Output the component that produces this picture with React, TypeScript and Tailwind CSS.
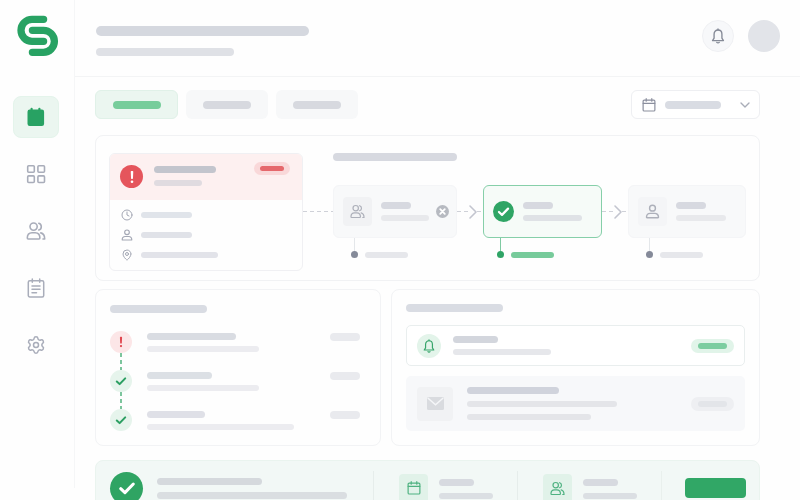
import type { ReactNode } from 'react'
import { ChevronDown, ChevronRight, Clock, MapPin, Settings } from 'lucide-react'
import clsx from 'clsx'

type IconProps = { className?: string }

function Logo() {
  return (
    <svg viewBox="0 0 42 42" className="ml-1 size-[42px]" fill="none" stroke="#28a263" strokeWidth="7.3" strokeLinecap="round">
      <path d="M26.6 4.3H15a11 11 0 0 0 0 22h11.6" />
      <path d="M15.4 15.3h11a11 11 0 0 1 0 22h-11" />
    </svg>
  )
}

function CalendarSolid({ className }: IconProps) {
  return (
    <svg viewBox="0 0 20 20" className={className} fill="currentColor">
      <path d="M3.7 2.6h.8V1.8a1.1 1.1 0 0 1 2.2 0v.8h5.6V1.8a1.1 1.1 0 0 1 2.2 0v.8h1.4a2.2 2.2 0 0 1 2.2 2.2v12a2.2 2.2 0 0 1-2.2 2.2H3.7a2.2 2.2 0 0 1-2.2-2.2v-12a2.2 2.2 0 0 1 2.2-2.2Z" />
    </svg>
  )
}

function GridIcon({ className }: IconProps) {
  return (
    <svg viewBox="0 0 20 20" className={className} fill="none" stroke="currentColor" strokeWidth="1.6">
      <rect x="1.7" y="1.7" width="6.6" height="6.6" rx="1" />
      <rect x="11.9" y="1.7" width="6.6" height="6.6" rx="1" />
      <rect x="1.7" y="11.9" width="6.6" height="6.6" rx="1" />
      <rect x="11.9" y="11.9" width="6.6" height="6.6" rx="1" />
    </svg>
  )
}

function UsersIcon({ className }: IconProps) {
  return (
    <svg viewBox="0 0 20 20" className={className} fill="none" stroke="currentColor" strokeWidth="1.6" strokeLinecap="round" strokeLinejoin="round">
      <circle cx="7.6" cy="5.6" r="3.6" />
      <path d="M2.2 18h10.8a.9.9 0 0 0 .9-.9c0-3.4-2-5.3-4.7-5.3H6c-2.7 0-4.7 1.9-4.7 5.3 0 .5.4.9.9.9Z" />
      <path d="M12.8 2.3a3.5 3.5 0 0 1 0 6.7" />
      <path d="M14.8 11.9c2.5.6 3.9 2.6 3.9 6.1h-1.7" />
    </svg>
  )
}

function UserIcon({ className }: IconProps) {
  return (
    <svg viewBox="0 0 20 20" className={className} fill="none" stroke="currentColor" strokeWidth="1.9" strokeLinejoin="round">
      <circle cx="10" cy="5.5" r="3.9" />
      <path d="M2.6 18.4h14.8a.6.6 0 0 0 .6-.6c0-3.5-2.1-5.3-5-5.3H7c-2.9 0-5 1.8-5 5.3 0 .3.3.6.6.6Z" />
    </svg>
  )
}

function NotesIcon({ className }: IconProps) {
  return (
    <svg viewBox="0 0 20 20" className={className} fill="none" stroke="currentColor" strokeWidth="1.5" strokeLinecap="round">
      <rect x="2.3" y="2.7" width="15.4" height="16.3" rx="1.5" />
      <path d="M6.3.9v3.4M13.700.9v3.4M6 8h8M6 11.300h8M6 14.700h4.500" />
    </svg>
  )
}

function CalendarIcon({ className }: IconProps) {
  return (
    <svg viewBox="0 0 20 20" className={className} fill="none" stroke="currentColor" strokeWidth="1.7" strokeLinecap="round">
      <rect x="1.6" y="3" width="16.8" height="15.6" rx="1.6" />
      <path d="M1.6 7.6h16.8M6 1v3.6M14 1v3.6" />
    </svg>
  )
}

function BellIcon({ className }: IconProps) {
  return (
    <svg viewBox="0 0 20 20" className={className} fill="none" stroke="currentColor" strokeWidth="1.7" strokeLinecap="round" strokeLinejoin="round">
      <path d="M10 2.500c-3 0-4.900 2.200-4.900 5.200v5L3.200 15.700h13.600l-1.900-3v-5c0-3-1.900-5.200-4.900-5.200Z" />
      <path d="M10 1.200v1.300M8.500 18c.7.9 2.300.9 3 0" />
    </svg>
  )
}

function CheckIcon({ className }: IconProps) {
  return (
    <svg viewBox="0 0 20 20" className={className} fill="none" stroke="currentColor" strokeWidth="3.4" strokeLinecap="round" strokeLinejoin="round">
      <path d="m3 10.800 4.700 4.400L17 5.600" />
    </svg>
  )
}

function AlertMark({ className }: IconProps) {
  return (
    <svg viewBox="0 0 20 20" className={className} fill="currentColor">
      <path d="M8.200 2.400a1 1 0 0 1 1-1h1.600a1 1 0 0 1 1 1l-.4 9.400a1 1 0 0 1-1 .9h-.8a1 1 0 0 1-1-.9Z" />
      <circle cx="10" cy="16.800" r="1.900" />
    </svg>
  )
}

function CrossMark({ className }: IconProps) {
  return (
    <svg viewBox="0 0 20 20" className={className}>
      <circle cx="10" cy="10" r="10" fill="#b7bac1" />
      <path d="m6.500 6.500 7 7m0-7-7 7" stroke="#fff" strokeWidth="2.800" strokeLinecap="round" />
    </svg>
  )
}

function MailIcon({ className }: IconProps) {
  return (
    <svg viewBox="0 0 17 13" className={className}>
      <rect width="17" height="13" rx="1.500" fill="#d9dbdf" />
      <path d="m.8 1 7.700 6.800L16.200 1" fill="none" stroke="#f5f6f8" strokeWidth="1.500" />
    </svg>
  )
}

function Bar({ className }: { className: string }) {
  return <span className={clsx('block shrink-0 rounded-full', className)} />
}

const navItems = [
  { label: 'Schedule', icon: CalendarSolid, active: true },
  { label: 'Overview', icon: GridIcon },
  { label: 'Team', icon: UsersIcon },
  { label: 'Reports', icon: NotesIcon },
  { label: 'Settings', icon: Settings },
]

function Sidebar() {
  return (
    <aside className="mb-3 w-[75px] shrink-0 border-r border-[#f5f6f7] pt-[15px] pl-[13px]">
      <Logo />
      <nav className="mt-[39px] flex flex-col gap-[15px]">
        {navItems.map(({ label, icon: Icon, active }) => (
          <a
            key={label}
            href="#"
            aria-label={label}
            className={clsx(
              'flex h-[42px] w-[46px] items-center justify-center rounded-lg',
              active ? 'border border-[#e4f4eb] bg-[#ebf6f0] text-[#28a263]' : 'text-[#a9adba]'
            )}
          >
            <Icon className="size-5" strokeWidth={1.8} />
          </a>
        ))}
      </nav>
    </aside>
  )
}

function Header() {
  return (
    <header className="flex h-[77px] items-center justify-between border-b border-[#f3f4f5] pr-5 pl-[21px]">
      <div className="space-y-3 pt-1.5">
        <Bar className="h-2.5 w-[213px] bg-[#d5d8df]" />
        <Bar className="h-2 w-[138px] bg-[#dfe1e6]" />
      </div>
      <div className="flex gap-3.5 pb-1">
        <button aria-label="Notifications" className="flex size-8 items-center justify-center rounded-full border border-[#f0f1f4] bg-[#f7f8fa] text-[#858a97]">
          <BellIcon className="size-4" />
        </button>
        <button aria-label="Account" className="size-8 rounded-full bg-[#e2e4e9]" />
      </div>
    </header>
  )
}

function Toolbar() {
  return (
    <div className="flex h-[29px] justify-between">
      <div className="flex gap-2">
        <button aria-label="Today" className="flex w-[83px] items-center justify-center rounded-md border border-[#e0f1e8] bg-[#ebf6f0]">
          <Bar className="h-2 w-12 bg-[#77cd9b]" />
        </button>
        <button aria-label="Upcoming" className="flex w-[82px] items-center justify-center rounded-md bg-[#f7f8f9]">
          <Bar className="h-2 w-12 bg-[#d7d9df]" />
        </button>
        <button aria-label="Past" className="flex w-[82px] items-center justify-center rounded-md bg-[#f7f8f9]">
          <Bar className="h-2 w-12 bg-[#d7d9df]" />
        </button>
      </div>
      <div className="relative flex w-[129px] items-center rounded-md border border-[#eeeff2] bg-white pr-1.5 pl-2.5">
        <CalendarIcon className="size-3.5 text-[#8b8f9e]" />
        <Bar className="ml-[9px] h-2 w-14 bg-[#d9dce3]" />
        <ChevronDown className="ml-auto size-4 text-[#a9adb8]" />
        <select aria-label="Date range" className="absolute inset-0 cursor-pointer opacity-0">
          <option value="week" aria-label="This week" />
          <option value="month" aria-label="This month" />
        </select>
      </div>
    </div>
  )
}

function IssueCard() {
  return (
    <article className="h-[118px] w-[194px] shrink-0 overflow-hidden rounded-md border border-[#f0f0f3]">
      <div className="flex h-[46px] bg-[#fdf0f0] pr-3 pl-2.5">
        <span className="mt-[11px] flex size-[23px] items-center justify-center rounded-full bg-[#e5555c] text-white">
          <AlertMark className="size-3.5" />
        </span>
        <div className="mt-3 ml-[11px] space-y-[7px]">
          <Bar className="h-[7px] w-[62px] bg-[#c3c5cd]" />
          <Bar className="h-1.5 w-12 bg-[#e0dbe0]" />
        </div>
        <span className="mt-2 ml-auto flex h-[13px] w-9 items-center justify-center rounded-full bg-[#f9d8d9]">
          <Bar className="h-[5px] w-6 bg-[#e5686c]" />
        </span>
      </div>
      <ul className="space-y-2 pt-[9px] pl-[11px] text-[#a3a7b4]">
        <li className="flex items-center gap-2">
          <Clock className="size-3" />
          <Bar className="h-1.5 w-[51px] bg-[#e0e4ea]" />
        </li>
        <li className="flex items-center gap-2">
          <UserIcon className="size-3" />
          <Bar className="h-1.5 w-[51px] bg-[#e0e2e8]" />
        </li>
        <li className="flex items-center gap-2">
          <MapPin className="size-3" />
          <Bar className="h-1.5 w-[77px] bg-[#e2e3e9]" />
        </li>
      </ul>
    </article>
  )
}

function Dashes({ className = 'flex-1' }: { className?: string }) {
  return <span className={clsx('h-px bg-[repeating-linear-gradient(to_right,#cfd1d8_0_4px,transparent_4px_7px)]', className)} />
}

function Arrow() {
  return (
    <div className="flex h-[53px] items-center">
      <Dashes className="flex-2" />
      <ChevronRight className="-mx-2 size-6 shrink-0 text-[#c3c5cf]" strokeWidth={1.6} />
      <Dashes />
    </div>
  )
}

type StepProps = {
  icon: ReactNode
  barWidth: string
  done?: boolean
  trailing?: ReactNode
}

function Step({ icon, barWidth, done, trailing }: StepProps) {
  return (
    <div>
      <div
        className={clsx(
          'flex h-[53px] items-center rounded-md border px-[9px]',
          done ? 'border-[#86cfa9] bg-[#f6fbf8]' : 'border-[#f4f5f7] bg-[#f8f9fa]'
        )}
      >
        {icon}
        <div className="ml-[9px] space-y-1.5">
          <Bar className="h-[7px] w-[30px] bg-[#d7d9e0]" />
          <Bar className={clsx('h-1.5', barWidth, done ? 'bg-[#dfe2e6]' : 'bg-[#e8e9ec]')} />
        </div>
        {trailing}
      </div>
      <div className={clsx('flex items-end', done ? 'pl-3.5' : 'pl-[18px]')}>
        <div className="flex flex-col items-center">
          <span className={clsx('h-[13px] w-px', done ? 'bg-[#7fcaa2]' : 'bg-[#e4e7ea]')} />
          <span className={clsx('size-[7px] rounded-full', done ? 'bg-[#2fa466]' : 'bg-[#858a99]')} />
        </div>
        <Bar className={clsx('ml-[7px] h-1.5 w-[43px]', done ? 'bg-[#77cb9b]' : 'bg-[#e6e7eb]')} />
      </div>
    </div>
  )
}

function FlowPanel() {
  return (
    <section className="mt-4 flex h-[146px] rounded-lg border border-[#f1f2f4] px-[13px] pt-[17px]">
      <IssueCard />
      <div className="mt-[58px] flex w-[30px] shrink-0">
        <Dashes />
      </div>
      <div className="flex-1">
        <Bar className="mb-6 h-2 w-[124px] bg-[#d7d9e0]" />
        <div className="grid grid-cols-[124px_26px_1fr_26px_1fr]">
          <Step
            icon={
              <span className="flex size-[29px] items-center justify-center rounded-sm bg-[#f1f2f4] text-[#adb0ba]">
                <UsersIcon className="size-[15px]" />
              </span>
            }
            barWidth="w-12"
            trailing={<CrossMark className="-mr-0.5 ml-auto size-[13px]" />}
          />
          <Arrow />
          <Step
            done
            icon={
              <span className="flex size-[21px] items-center justify-center rounded-full bg-[#2fa565] text-white">
                <CheckIcon className="size-[13px]" />
              </span>
            }
            barWidth="w-[59px]"
          />
          <Arrow />
          <Step
            icon={
              <span className="flex size-[29px] items-center justify-center rounded-sm bg-[#f4f5f7] text-[#adb0ba]">
                <UserIcon className="size-[15px]" />
              </span>
            }
            barWidth="w-[50px]"
          />
        </div>
      </div>
    </section>
  )
}

const activity = [
  { alert: true, title: 'w-[89px] bg-[#d9dce2]', detail: 'w-[112px]' },
  { title: 'w-[65px] bg-[#dce0e5]', detail: 'w-[112px]' },
  { title: 'w-[58px] bg-[#dfe0e7]', detail: 'w-[147px]' },
]

function ActivityPanel() {
  return (
    <section className="rounded-lg border border-[#f2f3f5] pt-[15px] pr-5 pl-3.5">
      <Bar className="h-2 w-[97px] bg-[#d9dce3]" />
      <ul className="mt-[18px]">
        {activity.map((item, i) => (
          <li key={i}>
            {i > 0 && (
              <span className="ml-2.5 block h-[17px] w-0.5 bg-[repeating-linear-gradient(to_bottom,#7cc59d_0_4px,transparent_4px_7px)]" />
            )}
            <div className="flex">
              <span
                className={clsx(
                  'flex size-[22px] items-center justify-center rounded-full',
                  item.alert ? 'bg-[#fce6e7] text-[#e0474f]' : 'bg-[#e6f4ec] text-[#2c9f62]'
                )}
              >
                {item.alert ? <AlertMark className="size-3" /> : <CheckIcon className="size-3" />}
              </span>
              <div className="ml-[15px] space-y-1.5 pt-0.5">
                <Bar className={clsx('h-[7px]', item.title)} />
                <Bar className={clsx('h-1.5 bg-[#ececf0]', item.detail)} />
              </div>
              <Bar className="mt-0.5 ml-auto h-2 w-[30px] bg-[#e9eaee]" />
            </div>
          </li>
        ))}
      </ul>
    </section>
  )
}

function MessagesPanel() {
  return (
    <section className="rounded-lg border border-[#f2f3f5] px-3.5 pt-3.5">
      <Bar className="h-2 w-[97px] bg-[#d9dce3]" />
      <div className="mt-[13px] flex h-[41px] items-center rounded-[5px] border border-[#e9eeee] bg-white px-2.5">
        <span className="flex size-6 items-center justify-center rounded-full bg-[#e3f4ea] text-[#37a56b]">
          <BellIcon className="size-3.5" />
        </span>
        <div className="ml-3 space-y-1.5">
          <Bar className="h-[7px] w-[45px] bg-[#d3d6dd]" />
          <Bar className="h-1.5 w-[98px] bg-[#e6e7eb]" />
        </div>
        <span className="ml-auto flex h-3.5 w-[43px] items-center justify-center rounded-full bg-[#e1f4e9]">
          <Bar className="h-1.5 w-[29px] bg-[#7ccda0]" />
        </span>
      </div>
      <div className="mt-2.5 flex h-[55px] items-center rounded-[5px] bg-[#f7f8fa] px-[11px]">
        <span className="flex h-[34px] w-9 items-center justify-center rounded-sm bg-[#f1f2f4]">
          <MailIcon className="h-[13px] w-[17px]" />
        </span>
        <div className="ml-3.5 space-y-[7px]">
          <Bar className="h-[7px] w-[92px] bg-[#d0d3dc]" />
          <Bar className="h-1.5 w-[150px] bg-[#e4e5e9]" />
          <Bar className="h-1.5 w-[124px] bg-[#e4e5e9]" />
        </div>
        <span className="ml-auto flex h-3.5 w-[43px] items-center justify-center rounded-full bg-[#eeeff2]">
          <Bar className="h-1.5 w-[29px] bg-[#e3e5e9]" />
        </span>
      </div>
    </section>
  )
}

function Stat({ icon }: { icon: ReactNode }) {
  return (
    <div className="flex items-center border-l border-[#e6edeb] pr-6 pl-[25px]">
      <span className="flex size-[29px] items-center justify-center rounded-sm bg-[#e1f2e9] text-[#4fb281]">{icon}</span>
      <div className="mt-px ml-[11px] space-y-[7px]">
        <Bar className="h-[7px] w-[35px] bg-[#d7dae0]" />
        <Bar className="h-1.5 w-[54px] bg-[#dbdfe3]" />
      </div>
    </div>
  )
}

function SummaryBanner() {
  return (
    <section className="mt-3.5 flex h-[56px] shrink-0 rounded-lg border border-[#eaf4ef] bg-[#f2f8f6] py-2.5 pr-[13px] pl-3.5">
      <div className="flex flex-1 items-center">
        <span className="flex size-[33px] items-center justify-center rounded-full bg-[#2fa463] text-white">
          <CheckIcon className="size-[18px]" />
        </span>
        <div className="mt-px ml-3.5 space-y-[7px]">
          <Bar className="h-[7px] w-[105px] bg-[#d5d9dd]" />
          <Bar className="h-[7px] w-[190px] bg-[#dadee1]" />
        </div>
      </div>
      <Stat icon={<CalendarIcon className="size-3.5" />} />
      <Stat icon={<UsersIcon className="size-[15px]" />} />
      <div className="flex items-center border-l border-[#e9f0ed] pl-[23px]">
        <button aria-label="Confirm" className="h-5 w-[61px] rounded-sm bg-[#31a766]" />
      </div>
    </section>
  )
}

export default function App() {
  return (
    <div className="flex h-screen overflow-hidden bg-[#fefefe] font-['Inter',sans-serif]">
      <Sidebar />
      <div className="min-w-0 flex-1">
        <Header />
        <main className="pt-[13px] pr-10 pl-5">
          <Toolbar />
          <FlowPanel />
          <div className="mt-2 grid h-[157px] grid-cols-[286fr_369fr] gap-2.5">
            <ActivityPanel />
            <MessagesPanel />
          </div>
          <SummaryBanner />
        </main>
      </div>
    </div>
  )
}
